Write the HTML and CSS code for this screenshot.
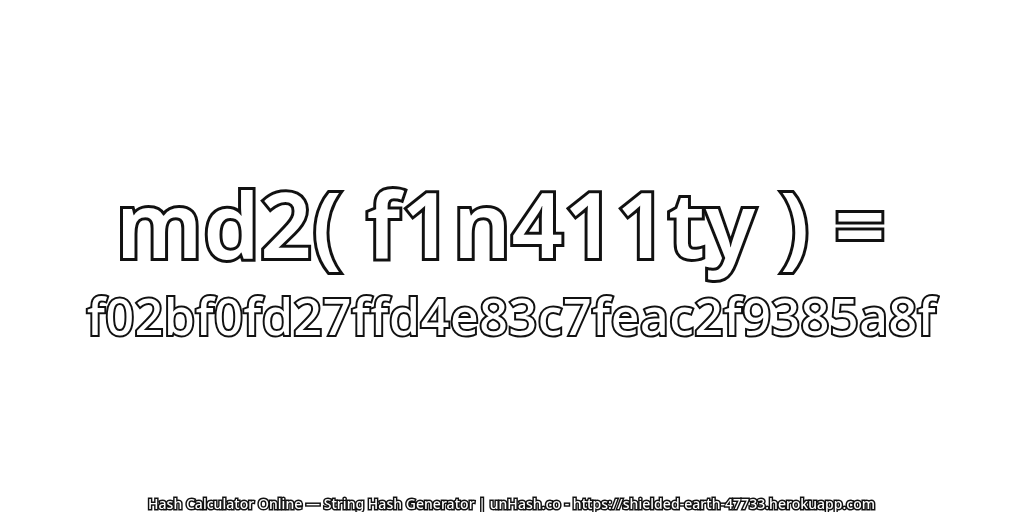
FILE: index.html
```html
<!DOCTYPE html>
<html lang="en">
<head>
  <meta charset="UTF-8">
  <title>md2 hash</title>
  <link rel="stylesheet" href="styles.css">
</head>
<body>
  <div class="page">
    <div class="result">
      <div class="line-input">md2( f1n411ty ) =</div>
      <div class="line-hash">f02bf0fd27ffd4e83c7feac2f9385a8f</div>
    </div>
    <div class="footer">Hash Calculator Online — String Hash Generator | unHash.co - https://shielded-earth-47733.herokuapp.com</div>
  </div>
</body>
</html>
```
FILE: styles.css
```css
body {
  margin: 0;
  background: #fff;
  font-family: "Noto Sans", sans-serif;
}

.page {
  width: 1024px;
  height: 512px;
  display: flex;
  flex-direction: column;
  align-items: center;
  overflow: hidden;
}

.result {
  flex: 1;
  display: flex;
  flex-direction: column;
  justify-content: center;
  align-items: center;
  padding-top: 25px;
}

.line-input,
.line-hash,
.footer {
  color: #fff;
  paint-order: stroke fill;
  white-space: nowrap;
  font-weight: 500;
  will-change: transform;
}

.line-input {
  font-size: 90px;
  line-height: 88px;
  font-weight: 600;
  letter-spacing: 0.8px;
  padding-right: 22px;
  -webkit-text-stroke: 6px #111;
}

.line-hash {
  font-size: 50px;
  line-height: 54px;
  letter-spacing: 0.65px;
  margin-top: 22px;
  -webkit-text-stroke: 4px #111;
}

.footer {
  font-size: 14px;
  line-height: 16px;
  letter-spacing: 0.04px;
  -webkit-text-stroke: 3px #111;
}
```
